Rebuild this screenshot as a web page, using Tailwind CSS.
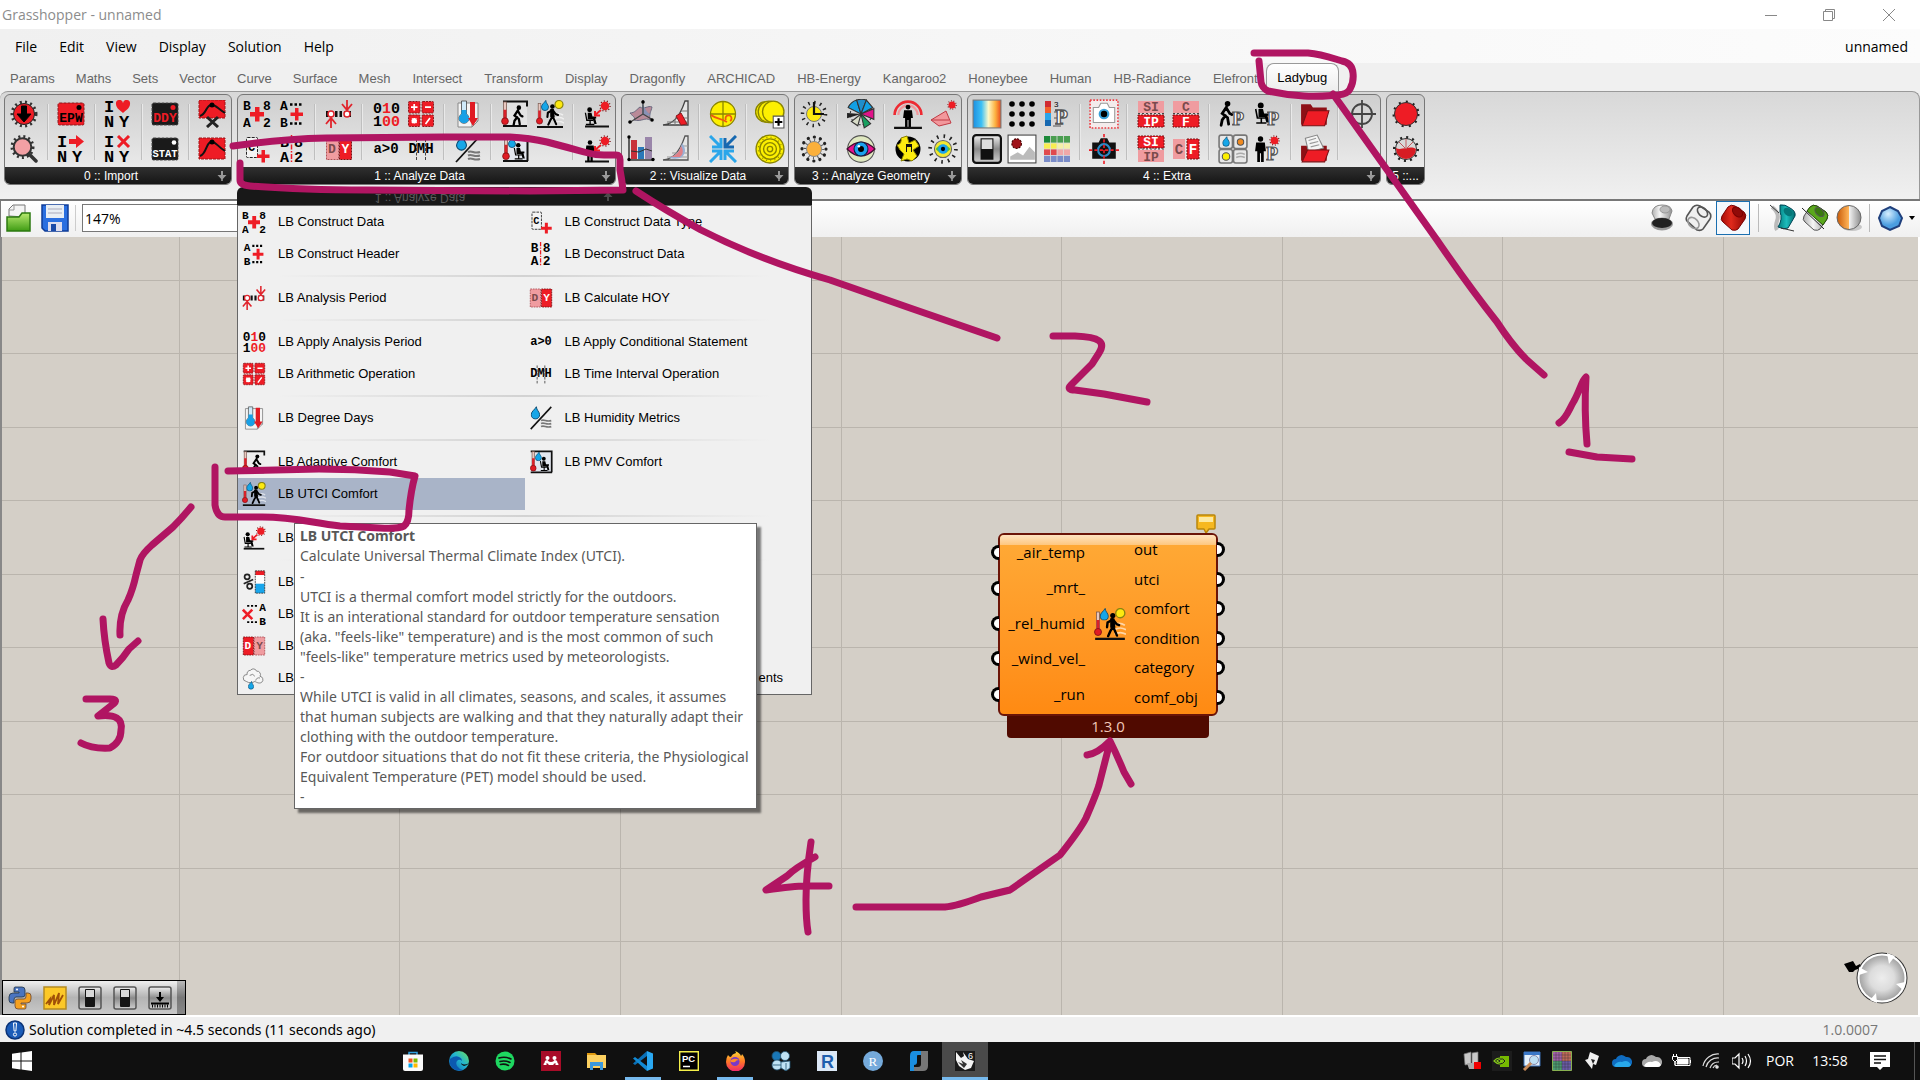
<!DOCTYPE html>
<html lang="en">
<head>
<meta charset="utf-8">
<title>Grasshopper - unnamed</title>
<script src="https://cdn.jsdelivr.net/npm/@tailwindcss/browser@4"></script>
</head>
<body class="flex min-h-screen flex-col overflow-x-hidden bg-[#f0f0f0] font-['Open_Sans',sans-serif] text-sm text-black">

<!-- Shared icon symbols -->
<svg class="absolute size-0" aria-hidden="true">
  <defs>
    <linearGradient id="heat"><stop offset="0" stop-color="#1d8fe0"/><stop offset=".3" stop-color="#3cc0f5"/><stop offset=".55" stop-color="#fdf9c8"/><stop offset=".8" stop-color="#fcb040"/><stop offset="1" stop-color="#ea4a1c"/></linearGradient>
    <linearGradient id="metal" x2="0" y2="1"><stop offset="0" stop-color="#f2f2f2"/><stop offset=".5" stop-color="#8a8a8a"/><stop offset="1" stop-color="#d0d0d0"/></linearGradient>
    <linearGradient id="edgeg" x1="1" x2="0" y2="1"><stop offset="0" stop-color="#6fe05a"/><stop offset=".45" stop-color="#22b5d0"/><stop offset="1" stop-color="#0b5bb5"/></linearGradient>
    <linearGradient id="fox" x2="0" y2="1"><stop offset="0" stop-color="#ffd83a"/><stop offset=".5" stop-color="#ff7a25"/><stop offset="1" stop-color="#f0266c"/></linearGradient>
    <linearGradient id="green" x2="0" y2="1"><stop offset="0" stop-color="#b8ea70"/><stop offset="1" stop-color="#3f9c14"/></linearGradient>
    <radialGradient id="ball" cx=".4" cy=".3"><stop offset="0" stop-color="#d6eeff"/><stop offset="1" stop-color="#4a9de0"/></radialGradient>
    <radialGradient id="compass"><stop offset="0" stop-color="#ededed"/><stop offset=".55" stop-color="#dcdcdc"/><stop offset="1" stop-color="#a4a4a4"/></radialGradient>
    <linearGradient id="redcyl"><stop offset="0" stop-color="#a80c08"/><stop offset=".4" stop-color="#e02a1c"/><stop offset="1" stop-color="#8c0604"/></linearGradient>
    <linearGradient id="tealcyl"><stop offset="0" stop-color="#037c7c"/><stop offset=".5" stop-color="#1dbcbc"/><stop offset="1" stop-color="#036a6c"/></linearGradient>
    <linearGradient id="graycyl"><stop offset="0" stop-color="#b0b0b0"/><stop offset=".4" stop-color="#f6f6f6"/><stop offset="1" stop-color="#909090"/></linearGradient>
    <linearGradient id="halfball"><stop offset="0" stop-color="#c85a08"/><stop offset=".49" stop-color="#ffb458"/><stop offset=".5" stop-color="#f4f4f4"/><stop offset="1" stop-color="#8c8c8c"/></linearGradient>

    <symbol id="sunburst" viewBox="0 0 12 12"><circle cx="6" cy="6" r="5" fill="none" stroke="#7a1014" stroke-width="1.500" stroke-dasharray="1 2.100"/><circle cx="6" cy="6" r="4.200" fill="#ed1c24"/></symbol>
    <symbol id="drop" viewBox="0 0 10 14"><path d="M6 .5C6 4 9.500 6 9.500 9a4.500 4.500 0 0 1-9 0C.5 5.500 4 4 6 .5Z" fill="#15a6e8" stroke="#0b4a70"/></symbol>
    <symbol id="thermo" viewBox="0 0 8 26"><rect x="2.500" y="1" width="3" height="18" fill="#e8c8c0" stroke="#7b5a50" stroke-width=".8"/><path d="M2.500 9h3v9h-3z" fill="#d8202a"/><circle cx="4" cy="21" r="3.500" fill="#e01b24" stroke="#7a1014" stroke-width=".8"/></symbol>
    <symbol id="walker" viewBox="0 0 16 24"><circle cx="8.500" cy="2.800" r="2.500"/><path d="m8 6 1 8 3.500 8M9 13l-3 5-2 4.500M8 7 3.500 9.500 3 14M9 7l3 4 2.500 1" fill="none" stroke="#000" stroke-width="2.300" stroke-linecap="round"/><path d="M6 5.500h4l1 9H6z"/></symbol>
    <symbol id="sitter" viewBox="0 0 16 20"><circle cx="6" cy="2.800" r="2.600"/><path d="M4 6h4l1 4h4v2l-1 0 1.500 6H11l-1.500-5H4z"/><path d="M1.500 6 3 14h7M6.500 14v4M2 18.500h9" fill="none" stroke="#000" stroke-width="1.400"/></symbol>
    <symbol id="crouch" viewBox="0 0 14 24"><circle cx="8" cy="3" r="2.600"/><path d="m7 6-4 6 5 4 1 6M7 7l3 5 2 1M6 14l-3 4-1 5" fill="none" stroke="#000" stroke-width="2.600" stroke-linecap="round"/></symbol>
    <symbol id="person" viewBox="0 0 12 24"><circle cx="6" cy="2.800" r="2.500"/><path d="M2 6h8l1 8H9v10H6.500v-8h-1v8H3V14H1z"/></symbol>

    <symbol id="i-down" viewBox="0 0 28 28"><circle cx="14" cy="14" r="12" fill="none" stroke="#333" stroke-width="3" stroke-dasharray="2 3.200"/><circle cx="14" cy="14" r="10.500" fill="#ee1c25" stroke="#222"/><path d="M11.500 6h5v8H21l-7 8-7-8h4.500z" stroke="#000"/></symbol>
    <symbol id="i-search" viewBox="0 0 28 28"><circle cx="12.500" cy="12" r="10.500" fill="none" stroke="#333" stroke-width="3" stroke-dasharray="2 3"/><circle cx="12.500" cy="12" r="8.800" fill="#f2a0a4" stroke="#333" stroke-width="2"/><path d="m19 19 7 7" stroke="#333" stroke-width="3.500" stroke-linecap="round"/></symbol>
    <symbol id="i-epw" viewBox="0 0 28 28"><rect x="1" y="3" width="26" height="22" rx="1.500" fill="#ee1c25" stroke="#8a1a1e" stroke-dasharray="3 1"/><circle cx="22" cy="7.500" r="2.500"/><text x="14" y="22" text-anchor="middle" font-family="Liberation Mono" font-weight="bold" font-size="13">EPW</text></symbol>
    <symbol id="i-ddy" viewBox="0 0 28 28"><rect x="1" y="3" width="26" height="22" rx="1.500" fill="#1a1a1a" stroke="#444" stroke-dasharray="3 1"/><circle cx="22" cy="7.500" r="2.500" fill="#ee1c25"/><text x="14" y="22" text-anchor="middle" font-family="Liberation Mono" font-weight="bold" font-size="13" fill="#ee1c25">DDY</text></symbol>
    <symbol id="i-stat" viewBox="0 0 28 28"><rect x="1" y="3" width="26" height="22" rx="1.500" fill="#1a1a1a" stroke="#444" stroke-dasharray="3 1"/><circle cx="23" cy="7.500" r="2.300" fill="#fff"/><text x="14" y="22" text-anchor="middle" font-family="Liberation Mono" font-weight="bold" font-size="10.500" fill="#fff">STAT</text></symbol>
    <symbol id="i-heart" viewBox="0 0 28 28"><g font-family="Liberation Mono" font-weight="bold" font-size="17"><text x="0" y="12">I</text><text x="0" y="27">N</text><text x="15" y="27">Y</text></g><path d="M19 13c-5-4-7-6-7-9a3.500 3.500 0 0 1 7-1 3.500 3.500 0 0 1 7 1c0 3-2 5-7 9Z" fill="#ee1c25"/></symbol>
    <symbol id="i-arrow" viewBox="0 0 28 28"><g font-family="Liberation Mono" font-weight="bold" font-size="17"><text x="0" y="12">I</text><text x="0" y="27">N</text><text x="15" y="27">Y</text></g><path d="M12 4h7V0l8 6.500-8 6.500V9h-7z" fill="#ee1c25"/></symbol>
    <symbol id="i-ix" viewBox="0 0 28 28"><g font-family="Liberation Mono" font-weight="bold" font-size="17"><text x="0" y="12">I</text><text x="0" y="27">N</text><text x="15" y="27">Y</text></g><path d="m14 1 11 11M25 1 14 12" stroke="#ee1c25" stroke-width="3"/></symbol>
    <symbol id="i-hill" viewBox="0 0 28 28"><rect x="1" y="3" width="26" height="21" fill="#ee1c25" stroke="#a01418" stroke-dasharray="3 1"/><path d="M2 21c7-2 6-15 12-14 4 0 5 4 13 9" fill="none" stroke="#111" stroke-width="2"/><circle cx="14" cy="7" r="2.500"/></symbol>
    <symbol id="i-hillx" viewBox="0 0 28 28"><rect x="1" y="0" width="26" height="18" fill="#ee1c25" stroke="#a01418" stroke-dasharray="3 1"/><path d="M2 16c7-2 6-12 12-11 4 0 5 3 13 8" fill="none" stroke="#111" stroke-width="2"/><circle cx="14" cy="5" r="2.500"/><path d="m9 17 11 10m0-10L9 27" stroke="#222" stroke-width="3"/></symbol>

    <symbol id="i-cdata" viewBox="0 0 28 28"><g font-family="Liberation Mono" font-weight="bold" font-size="13"><text x="0" y="10">B</text><text x="20" y="10">8</text><text x="0" y="27">A</text><text x="20" y="27">2</text></g><path d="M12 7h4.500v5H21v4.500h-4.500v5H12v-5H7V12h5z" fill="#ee1c25"/></symbol>
    <symbol id="i-header" viewBox="0 0 28 28"><g font-family="Liberation Mono" font-weight="bold" font-size="13"><text x="2" y="10">A</text><text x="2" y="27">B</text></g><path d="M12 4.500h13M12 23.500h13" stroke="#000" stroke-width="2.500" stroke-dasharray="2.500 2"/><path d="M17 8h3.500v4.500H25V16h-4.500v4.500H17V16h-4.500v-3.500H17z" fill="#ee1c25"/></symbol>
    <symbol id="i-ctype" viewBox="0 0 28 28"><rect x="3.500" y="2.500" width="11" height="20" rx="1" fill="#f4f4f4" stroke="#222" stroke-dasharray="3 1.200"/><text x="5" y="16" font-family="Liberation Mono" font-weight="bold" font-size="12">C</text><path d="M18.500 15H22v4.500h4.500V23H22v4.500h-3.500V23H14v-3.500h4.500z" fill="#ee1c25"/></symbol>
    <symbol id="i-decon" viewBox="0 0 28 28"><g font-family="Liberation Mono" font-weight="bold" font-size="15"><text x="2" y="12">B</text><text x="16" y="12">8</text><text x="2" y="27">A</text><text x="16" y="27">2</text></g><path d="M13.500 0v28" stroke="#ee1c25" stroke-width="1.500" stroke-dasharray="5 1.500 1.500 1.500"/></symbol>
    <symbol id="i-period" viewBox="0 0 28 28"><path d="M1 14h26" stroke="#111" stroke-width="6" stroke-dasharray="2.500 2"/><g fill="#fff" stroke="#e0242c" stroke-width="1.500"><circle cx="6" cy="14" r="3"/><circle cx="22" cy="14" r="3"/></g><path d="M6 28V18M1 24l5-6 5 6M22 0v10M17 4l5 6 5-6" fill="none" stroke="#e0242c" stroke-width="1.800"/></symbol>
    <symbol id="i-hoy" viewBox="0 0 28 28"><rect x="1.500" y="3.500" width="12" height="21" fill="#f09ca0" stroke="#b05056" stroke-dasharray="2 1"/><rect x="14.500" y="3.500" width="12" height="21" fill="#ee1c25" stroke="#7a1014" stroke-dasharray="2 1"/><g font-family="Liberation Mono" font-weight="bold" font-size="13"><text x="3" y="18" fill="#7a4a4c">D</text><text x="16.500" y="18" fill="#fff">Y</text></g></symbol>
    <symbol id="i-hoy2" viewBox="0 0 28 28"><rect x="1.500" y="3.500" width="12" height="21" fill="#ee1c25" stroke="#7a1014" stroke-dasharray="2 1"/><rect x="14.500" y="3.500" width="12" height="21" fill="#f09ca0" stroke="#b05056" stroke-dasharray="2 1"/><g font-family="Liberation Mono" font-weight="bold" font-size="13"><text x="3" y="18" fill="#fff">D</text><text x="16.500" y="18" fill="#7a4a4c">Y</text></g></symbol>
    <symbol id="i-bin" viewBox="0 0 28 28"><g font-family="Liberation Mono" font-weight="bold" font-size="15"><text x="1" y="13">0<tspan fill="#ee1c25">1</tspan>0</text><text x="1" y="26">1<tspan fill="#ee1c25">00</tspan></text></g></symbol>
    <symbol id="i-cond" viewBox="0 0 28 28"><text x="14" y="18" text-anchor="middle" font-family="Liberation Mono" font-weight="bold" font-size="14">a&gt;0</text></symbol>
    <symbol id="i-dmh" viewBox="0 0 28 28"><text x="14" y="18" text-anchor="middle" font-family="Liberation Mono" font-weight="bold" font-size="14">DMH</text><path d="M9.500 4v21M18.500 4v21" stroke="#444" stroke-dasharray="3 1.500"/></symbol>
    <symbol id="i-arith" viewBox="0 0 28 28"><g fill="#ee1c25" stroke="#8a1a1e" stroke-dasharray="2 1"><rect x="1.500" y="1.500" width="11.500" height="11.500" rx="1"/><rect x="15" y="1.500" width="11.500" height="11.500" rx="1"/><rect x="1.500" y="15" width="11.500" height="11.500" rx="1"/><rect x="15" y="15" width="11.500" height="11.500" rx="1"/></g><path d="M4 7.200h6.500M7.200 4v6.500M18 7.200h6M4.500 20.800h5.500M7.200 18v5.500M5 18.500l4.500 4.500M9.500 18.500 5 23M23 18l-4.500 6" stroke="#fff" stroke-width="1.700"/></symbol>
    <symbol id="i-degree" viewBox="0 0 28 28"><path d="M4 3h20v18l-6 6H4z" fill="#f4f4f4" stroke="#888"/><path d="M18 27v-6h6" fill="none" stroke="#888"/><path d="M7.500 1h5v13a5 5 0 1 1-5 0z" fill="#cfeafa" stroke="#444" stroke-width=".8"/><path d="M7.500 10h5v4a5 5 0 1 1-5 0z" fill="#18a0e6"/><path d="M16 2h5v16h3l-5 8-5-8h2z" fill="#e01b24"/></symbol>
    <symbol id="i-humid" viewBox="0 0 28 28"><use href="#drop" x="2" y="0" width="11" height="16"/><path d="M26 1 2 27" stroke="#111" stroke-width="1.800"/><path d="M14 17c4-2 6 2 12 0M14 20.500c4-2 6 2 12 0M14 24c4-2 6 2 12 0" fill="none" stroke="#777" stroke-width="2"/></symbol>
    <symbol id="i-adapt" viewBox="0 0 28 28"><path d="M2 2h24v24H2z" fill="#ededed" opacity=".6"/><path d="M2 1.500h24v5M2 26h24" fill="none" stroke="#111" stroke-width="2"/><use href="#thermo" x="0" y="1" width="8" height="25"/><use href="#crouch" x="10" y="5" width="14" height="21"/></symbol>
    <symbol id="i-pmv" viewBox="0 0 28 28"><path d="M2 2h24v24H2z" fill="#e2e6ee"/><path d="M2 1.500h24.500V26M2 26h25" fill="none" stroke="#111" stroke-width="2"/><use href="#thermo" x="1" y="1" width="8" height="25"/><use href="#drop" x="7" y="2" width="8" height="11"/><use href="#sitter" x="12" y="7" width="14" height="19"/></symbol>
    <symbol id="i-utci" viewBox="0 0 28 28"><path d="M17 15q5-3 10 0M18 19q5-3 10 0M18 23q5-3 10 0" fill="none" stroke="#fff" stroke-opacity=".6" stroke-width="1.500"/><path d="M1 27h26" stroke="#111" stroke-width="2"/><use href="#thermo" x="0" y="2" width="7" height="24"/><use href="#drop" x="5" y="0" width="8" height="11"/><use href="#walker" x="8" y="4" width="16" height="22"/><circle cx="23" cy="4.500" r="4" fill="#fde910" stroke="#8a8410" stroke-width="1.200"/></symbol>
    <symbol id="i-sitsun" viewBox="0 0 28 28"><path d="M2 26.500h24" stroke="#111" stroke-width="2"/><use href="#sitter" x="1" y="7" width="15" height="19"/><use href="#sunburst" x="16" y="0" width="12" height="12"/><path d="m18 10-6 5m0-4v4.500h5" fill="none" stroke="#ee1c25" stroke-width="2"/></symbol>
    <symbol id="i-standsun" viewBox="0 0 28 28"><path d="M2 26.500h24" stroke="#111" stroke-width="2"/><use href="#person" x="1" y="5" width="12" height="22"/><use href="#sunburst" x="16" y="0" width="12" height="12"/><path d="m18 10-6 5m0-4v4.500h5" fill="none" stroke="#ee1c25" stroke-width="2"/></symbol>
    <symbol id="i-percent" viewBox="0 0 28 28"><g fill="none" stroke="#222" stroke-width="2"><circle cx="6" cy="8" r="3"/><circle cx="9" cy="19" r="3"/><path d="m2 16 11-5"/></g><path d="M15.500 1h11v5h-11z" fill="#ee1c25"/><path d="M15.500 6h11v10h-11z" fill="#fff"/><path d="M15.500 16h11v11h-11z" fill="#18a6ec"/><path d="M15.500 1h11v26h-11z" fill="none" stroke="#333" stroke-dasharray="2 1"/></symbol>
    <symbol id="i-remove" viewBox="0 0 28 28"><path d="m1 9 11 11M12 9 1 20" stroke="#ee1c25" stroke-width="3"/><path d="M6 4.500h13M6 23.500h13" stroke="#000" stroke-width="2" stroke-dasharray="2.500 2"/><g font-family="Liberation Mono" font-weight="bold" font-size="13"><text x="20" y="10">A</text><text x="20" y="27">B</text></g></symbol>
    <symbol id="i-cloud" viewBox="0 0 28 28"><g fill="#f6f6f6" stroke="#777"><path d="M5 18a4 4 0 0 1 1-8 4 4 0 0 1 4-5 4 4 0 0 1 7 1 4 4 0 0 1 4 6 4 4 0 0 1 2 7c-3 2-6 0-8-1-3 2-7 2-10 0Z"/><path d="M9 11q4-3 6 1m1 5q1-4 5-3" fill="none"/></g><use href="#drop" x="7" y="17" width="7" height="11"/></symbol>

    <symbol id="i-mesh" viewBox="0 0 28 28"><path d="M3 13c5 0 7-4 10-6 4 3 8-2 12 0-1 5-3 6-2 13-5-3-8 2-16 0 2-3-2-4-4-7Z" fill="#b98a98" stroke="#6a6a80"/><path d="M15 3c3 5 5 10 9 12-4 1-6 1-9 0z" fill="#7a94bd" opacity=".8"/><path d="M16 0v14L2 23M16 14l10 6" fill="none" stroke="#444" stroke-width="1.300"/><circle cx="16" cy="2" r="1.800"/><circle cx="3" cy="22" r="1.800"/><circle cx="25" cy="20" r="1.800"/></symbol>
    <symbol id="i-bars" viewBox="0 0 28 28"><path d="M4 5h6v19H4z" fill="#c8303a"/><path d="M11 12h6v12h-6z" fill="#2a78b8"/><path d="M18 2h7v22h-7z" fill="#9a86aa"/><path d="M2 1v24h25" fill="none" stroke="#333" stroke-width="1.500"/><path d="m4 16 8 1 7-3 6 2" fill="none" stroke="#333"/><g><circle cx="2" cy="2" r="1.700"/><circle cx="2" cy="24.500" r="1.700"/><circle cx="26" cy="24.500" r="1.700"/></g></symbol>
    <symbol id="i-psyred" viewBox="0 0 28 28"><path d="M1 25c9-1 16-6 22-24h3v24z" fill="#e6e6e6" stroke="#444" stroke-width="1.300"/><path d="M8 23v2m5-6v6m5-12v12M5 22h21M13 18h13M19 11h7" stroke="#777"/><path d="m14 16 5-3 6 11-6 1z" fill="#ee1c25" stroke="#8a1a1e"/></symbol>
    <symbol id="i-psy" viewBox="0 0 28 28"><path d="M1 25c9-1 16-6 22-24h3v24z" fill="#e6e6e6" stroke="#555" stroke-width="1.300"/><path d="M5 22h21M10 18h16M19 11h7" stroke="#999"/><path d="M7 23c9-3 12-10 13-15 3 4 5 9 0 14-4 2-8 2-13 1Z" fill="#9ab0d4"/><path d="M9 22c8-3 9-8 10-11 3 4 2 9-1 11z" fill="#e08088"/></symbol>
    <symbol id="i-sphere" viewBox="0 0 28 28"><circle cx="14" cy="14" r="12.500" fill="#fdf000" stroke="#8a8500" stroke-width="1.300"/><path d="M1 14h26M14 1v26" stroke="#8a8500" stroke-width="1.300"/><path d="M2 15c5 4 10 3 16 7M17 20a3 3 0 1 1 4 1" fill="none" stroke="#ee5a10" stroke-width="1.800"/></symbol>
    <symbol id="i-arrows" viewBox="0 0 28 28"><g fill="none" stroke="#2aa6ea" stroke-width="3"><path d="m1 1 10 10M3 12h9V3M1 27l10-10M3 16h9v9M27 27 17 17M25 16h-9v9"/><path d="M27 1 17 11M25 12h-9V3" stroke="#1668b0"/></g></symbol>
    <symbol id="i-stack" viewBox="0 0 28 28"><g fill="#fdf000" stroke="#8a8500" stroke-width="1.300"><circle cx="10" cy="12" r="9.500"/><circle cx="13" cy="12" r="10"/><circle cx="17" cy="12" r="10"/></g><path d="M17 16h10v11H17z" fill="#fff" stroke="#555"/><path d="M22 18v7M18.500 21.500h7" stroke="#000" stroke-width="2"/></symbol>
    <symbol id="i-rings" viewBox="0 0 28 28"><g fill="#fdf000" stroke="#8a8500" stroke-width="1.300"><circle cx="14" cy="14" r="13"/><circle cx="14" cy="14" r="9.500"/><circle cx="14" cy="14" r="6"/><circle cx="14" cy="14" r="2.500"/></g><circle cx="14" cy="14" r="11" fill="none" stroke="#8a8500" stroke-dasharray="1 3"/></symbol>
    <symbol id="i-sunclock" viewBox="0 0 28 28"><circle cx="14" cy="14" r="11.500" fill="none" stroke="#222" stroke-width="3.500" stroke-dasharray="1.500 4.500"/><circle cx="14" cy="14" r="7.500" fill="#fde910" stroke="#777"/><path d="M14 2v12h10" fill="none" stroke="#111" stroke-width="2.200"/></symbol>
    <symbol id="i-sun" viewBox="0 0 28 28"><circle cx="14" cy="14" r="12" fill="none" stroke="#222" stroke-width="3.200" stroke-linecap="round" stroke-dasharray=".1 6.180"/><circle cx="14" cy="14" r="9" fill="none" stroke="#555" stroke-width="3" stroke-dasharray="1 3.700"/><circle cx="14" cy="14" r="7.500" fill="#fbb03b" stroke="#888"/></symbol>
    <symbol id="i-rose" viewBox="0 0 28 28"><circle cx="14" cy="14" r="10" fill="none" stroke="#333" stroke-dasharray="2 2"/><path d="M14 14 2 8a13 13 0 0 1 8-7z" fill="#12a0e4" stroke="#333"/><path d="m14 14-4-13a13 13 0 0 1 9 0z" fill="#1f8ecc" stroke="#333"/><path d="m14 14 5-13 6 7z" fill="#12a0e4" stroke="#333"/><path d="m14 14 12-5v10z" fill="#e0128a" stroke="#333"/><path d="m14 14 9 9-6 4z" fill="#18a060" stroke="#333"/><path d="m14 14-3 11-6-4z" fill="#d8dcc8" stroke="#333"/><path d="M14 14 1 13v5z" fill="#222"/></symbol>
    <symbol id="i-eye" viewBox="0 0 28 28"><circle cx="14" cy="14" r="12.500" fill="#dfe8c0" stroke="#555"/><path d="M1 14Q14 1 27 14 14 27 1 14Z" fill="#e8128c" stroke="#401030" stroke-width="1.200"/><circle cx="14" cy="14" r="6.500" fill="#1ba2ee" stroke="#124"/><circle cx="14" cy="14" r="2.800"/><circle cx="12" cy="11.500" r="1.200" fill="#fff"/></symbol>
    <symbol id="i-dome" viewBox="0 0 28 28"><path d="M1.500 15a12.500 12.500 0 0 1 25 0" fill="none" stroke="#ee2a32" stroke-width="2.500"/><path d="M5 15a9 9 0 0 1 18 0" fill="none" stroke="#f2989c" stroke-width="2"/><use href="#person" x="8" y="5" width="12" height="22"/><path d="M1 27h26" stroke="#111" stroke-width="2"/></symbol>
    <symbol id="i-globe" viewBox="0 0 28 28"><circle cx="14" cy="14" r="12.500"/><path d="M3 10q5-1 4-7l6-2 2 7 6-3 4 6-6 4 4 6-5 5-5-2-6 2 3-7-4-4z" fill="#fdec10" stroke="#8a8000"/><path d="M12 9h6v8h-6z" fill="#111"/><path d="M13 12h4v8h-4z" fill="#fdec10"/></symbol>
    <symbol id="i-face" viewBox="0 0 28 28"><path d="m2 20 15-9 5 12-12 3z" fill="#f2989c" stroke="#c03a44"/><path d="m2 20 18 0" stroke="#c03a44"/><use href="#sunburst" x="18" y="0" width="10" height="10"/></symbol>
    <symbol id="i-suneye" viewBox="0 0 28 28"><circle cx="14" cy="14" r="12" fill="none" stroke="#222" stroke-width="3.500" stroke-dasharray="1.500 4.800"/><circle cx="14" cy="14" r="8" fill="#f2e830" stroke="#666"/><path d="M7 14q7-8 14 0-7 8-14 0Z" fill="#4cc04a"/><circle cx="14" cy="14" r="4.500" fill="#1ba2ee"/><circle cx="14" cy="14" r="2"/></symbol>

    <symbol id="i-grad" viewBox="0 0 28 28"><rect x="1" y="1" width="26" height="26" fill="url(#heat)" stroke="#777"/></symbol>
    <symbol id="i-toggle" viewBox="0 0 28 28"><rect x="1" y="1" width="26" height="26" rx="3" fill="url(#metal)" stroke="#111" stroke-width="2"/><rect x="8" y="4" width="12" height="20" fill="#111"/><rect x="9" y="5" width="10" height="9" fill="#ddd"/></symbol>
    <symbol id="i-dots" viewBox="0 0 28 28"><g><circle cx="4" cy="4" r="2.800"/><circle cx="14" cy="4" r="2.800"/><circle cx="24" cy="4" r="2.800"/><circle cx="4" cy="14" r="2.800"/><circle cx="14" cy="14" r="2.800"/><circle cx="24" cy="14" r="2.800"/><circle cx="4" cy="24" r="2.800"/><circle cx="14" cy="24" r="2.800"/><circle cx="24" cy="24" r="2.800"/></g></symbol>
    <symbol id="i-image" viewBox="0 0 28 28"><rect x="1" y="1" width="26" height="26" fill="#fff" stroke="#444"/><circle cx="9" cy="9" r="4.500" fill="#a0141a" stroke="#400" stroke-dasharray="2 1"/><path d="M3 24v-3l7-4 5 3 6-8 5 5v7z" fill="#bbb"/></symbol>
    <symbol id="bigp" viewBox="0 0 16 18"><text x="0" y="16" font-family="Liberation Serif" font-weight="bold" font-size="21" fill="#fff" stroke="#555" stroke-width="1.300">P</text></symbol>
    <symbol id="i-legend" viewBox="0 0 28 28"><path d="M2 1h6v6H2z" fill="#d02a30"/><path d="M2 7h6v6H2z" fill="#f2602a"/><path d="M2 13h6v7H2z" fill="#2aa6ea"/><path d="M2 20h6v6H2z" fill="#1668b0"/><text x="11" y="7" font-size="8" font-family="Liberation Sans">3</text><path d="M10 26h8M11 12h3M11 18h3" stroke="#555"/><use href="#bigp" x="12" y="8" width="16" height="18"/></symbol>
    <symbol id="i-grid" viewBox="0 0 28 28"><path d="M1 1h26v7H1z" fill="#4a9e50"/><path d="M1 8h26v6H1z" fill="#f8ee50"/><path d="M1 14h26v6H1z" fill="#e04a4e"/><path d="M1 20h26v7H1z" fill="#7a8cc8"/><path d="M1 1h7v7H1z" fill="#1d8a3a"/><path d="M14 8h13v6H14z" fill="#f4f0a8"/><path d="M14 14h13v6H14z" fill="#f0a8a8"/><path d="M7.500 1v26M14 1v26M20.500 1v26M1 8h26M1 14h26M1 20.500h26" stroke="#ddd" stroke-width=".8"/></symbol>
    <symbol id="i-camframe" viewBox="0 0 28 28"><rect x="1" y="1" width="26" height="26" fill="#f4ecec" stroke="#ee3a40" stroke-width="1.500" stroke-dasharray="1.500 1.500"/><path d="M4 8h5l2-4h6l2 4h5v14H4z" fill="#fff" stroke="#999"/><circle cx="14" cy="14" r="5" fill="#38a0d8"/><circle cx="14" cy="14" r="3"/></symbol>
    <symbol id="i-camtarget" viewBox="0 0 28 28"><path d="M3 8h6l2-4h6l2 4h6v15H3z" fill="#111"/><circle cx="14" cy="15" r="5.500" fill="none" stroke="#2a8cc8" stroke-width="2"/><path d="M14 0v28M0 15h28" stroke="#ee1c25" stroke-width="1.500" stroke-dasharray="3 2"/></symbol>
    <symbol id="i-siip" viewBox="0 0 28 28"><path d="M1 1h26v12H1z" fill="#f09ca0"/><path d="M1 15h26v12H1z" fill="#ee1c25" stroke="#7a1014" stroke-dasharray="2 1"/><path d="M1 13.500h26" stroke="#444" stroke-dasharray="2 2"/><g font-family="Liberation Mono" font-weight="bold" font-size="13" text-anchor="middle"><text x="14" y="11" fill="#7a4a4c">SI</text><text x="14" y="25.500" fill="#fff">IP</text></g></symbol>
    <symbol id="i-siip2" viewBox="0 0 28 28"><path d="M1 1h26v12H1z" fill="#ee1c25" stroke="#7a1014" stroke-dasharray="2 1"/><path d="M1 15h26v12H1z" fill="#f09ca0"/><path d="M1 14h26" stroke="#444" stroke-dasharray="2 2"/><g font-family="Liberation Mono" font-weight="bold" font-size="13" text-anchor="middle"><text x="14" y="11" fill="#fff">SI</text><text x="14" y="25.500" fill="#7a4a4c">IP</text></g></symbol>
    <symbol id="i-cf" viewBox="0 0 28 28"><path d="M1 1h26v12H1z" fill="#f09ca0"/><path d="M1 15h26v12H1z" fill="#ee1c25" stroke="#7a1014" stroke-dasharray="2 1"/><path d="M1 13.500h26" stroke="#444" stroke-dasharray="2 2"/><g font-family="Liberation Mono" font-weight="bold" font-size="13" text-anchor="middle"><text x="14" y="11" fill="#7a4a4c">C</text><text x="14" y="25.500" fill="#fff">F</text></g></symbol>
    <symbol id="i-cf2" viewBox="0 0 28 28"><path d="M1 4h12v20H1z" fill="#f09ca0"/><path d="M15 4h12v20H15z" fill="#ee1c25" stroke="#7a1014" stroke-dasharray="2 1"/><g font-family="Liberation Mono" font-weight="bold" font-size="14" text-anchor="middle"><text x="7" y="19" fill="#7a4a4c">C</text><text x="21" y="19" fill="#fff">F</text></g></symbol>
    <symbol id="i-runp" viewBox="0 0 28 28"><use href="#crouch" x="0" y="0" width="15" height="27"/><use href="#bigp" x="13" y="9" width="15" height="18"/></symbol>
    <symbol id="i-sitp" viewBox="0 0 28 28"><use href="#sitter" x="0" y="2" width="18" height="23"/><use href="#bigp" x="13" y="9" width="15" height="18"/></symbol>
    <symbol id="i-standp" viewBox="0 0 28 28"><use href="#person" x="0" y="1" width="13" height="26"/><use href="#sunburst" x="15" y="0" width="11" height="11"/><use href="#bigp" x="12" y="10" width="15" height="17"/></symbol>
    <symbol id="i-four" viewBox="0 0 28 28"><g fill="#e8e8e8" stroke="#777" stroke-width="1.500"><rect x="1" y="1" width="12.500" height="12.500" rx="2"/><rect x="14.500" y="1" width="12.500" height="12.500" rx="2"/><rect x="1" y="14.500" width="12.500" height="12.500" rx="2"/><rect x="14.500" y="14.500" width="12.500" height="12.500" rx="2"/></g><use href="#drop" x="4" y="2" width="7" height="10"/><circle cx="21" cy="7.500" r="3" fill="#f08a20" stroke="#555"/><circle cx="7.500" cy="21" r="3.500" fill="#fdf000" stroke="#555"/><path d="M17 19q4-2 8 0m-8 3q4-2 8 0" fill="none" stroke="#aaa" stroke-width="1.500"/></symbol>
    <symbol id="i-folder" viewBox="0 0 28 28"><path d="M1 5h9l2 3h13v16H1z" fill="#8e1016"/><path d="M7 11h20l-4 14H2z" fill="#ee1c25" stroke="#7a1014"/></symbol>
    <symbol id="i-folderdoc" viewBox="0 0 28 28"><path d="M1 11h24v14H1z" fill="#8e1016"/><path d="m5 4 11-3 6 12-14 4z" fill="#f4f4f4" stroke="#888"/><path d="m8 6 7-2M9 9l8-2M10 12l8-2" stroke="#999"/><path d="M7 15h20l-4 11H2z" fill="#ee1c25" stroke="#7a1014"/></symbol>
    <symbol id="i-cross" viewBox="0 0 28 28"><circle cx="14" cy="14" r="10" fill="none" stroke="#444" stroke-width="1.800"/><path d="M14 0v28M0 14h28" stroke="#444" stroke-width="1.800"/></symbol>
    <symbol id="i-redball" viewBox="0 0 28 28"><circle cx="14" cy="14" r="12" fill="none" stroke="#222" stroke-width="3" stroke-dasharray="2 5"/><circle cx="14" cy="14" r="11.500" fill="#ee1c25" stroke="#333"/></symbol>
    <symbol id="i-halfred" viewBox="0 0 28 28"><circle cx="14" cy="14" r="11.500" fill="none" stroke="#222" stroke-width="3" stroke-dasharray="2 4"/><circle cx="14" cy="14" r="10.500" fill="#d8d8d8" stroke="#333"/><path d="M4 13c5 3 14-3 20 1a10 10 0 0 1-20 0z" fill="#d81c24"/><path d="M14 4v10L7 7m7 7 7-7" stroke="#c05a5e" fill="none"/></symbol>
    <symbol id="plug" viewBox="0 0 10 10"><path d="M4 0h2v4h3.500L5.800 8V10H4.200V8L.5 4H4z" fill="#999"/></symbol>
    <symbol id="cyl" viewBox="0 0 28 28"><path d="M9 3 3 12q-2 4 1 6l9 8q4 1 6-1l7-10q2-4-1-7L16 2q-4-2-7 1Z"/></symbol>
  </defs>
</svg>

<header class="flex h-[29px] items-center justify-between bg-white text-[#8c8c8c]">
  <h1 class="pl-0.5 text-sm">Grasshopper - unnamed</h1>
  <div class="flex items-center">
    <button class="flex w-[58px] justify-center" aria-label="Minimize"><svg class="size-3" viewBox="0 0 12 12" stroke="#888"><path d="M0 6.500h12"/></svg></button>
    <button class="flex w-[58px] justify-center" aria-label="Restore"><svg class="size-3" viewBox="0 0 12 12" fill="none" stroke="#888"><path d="M.5 2.500h9v9h-9zM2.500 2.500v-2h9v9h-2"/></svg></button>
    <button class="flex w-[62px] justify-center" aria-label="Close"><svg class="size-3" viewBox="0 0 12 12" stroke="#888"><path d="m0 0 12 12M12 0 0 12"/></svg></button>
  </div>
</header>

<nav class="flex h-[34px] items-center justify-between bg-linear-to-r from-[#f0f0f0] to-[#fcfcfc] pt-0.5 pr-3 pl-[15px] text-sm" aria-label="Menu">
  <div class="flex gap-[22px]">
    <button>File</button><button>Edit</button><button>View</button><button>Display</button><button>Solution</button><button>Help</button>
  </div>
  <span>unnamed</span>
</nav>

<nav class="flex h-7 items-end gap-[22px] pl-2.5 font-['Liberation_Sans',sans-serif] text-[13px] text-[#666]" aria-label="Tabs">
  <div class="flex gap-[21px]"><button class="h-6">Params</button><button class="h-6">Maths</button><button class="h-6">Sets</button><button class="h-6">Vector</button><button class="h-6">Curve</button><button class="h-6">Surface</button><button class="h-6">Mesh</button></div>
  <button class="h-6">Intersect</button><button class="h-6">Transform</button><button class="h-6">Display</button><button class="h-6">Dragonfly</button><button class="h-6">ARCHICAD</button><button class="h-6">HB-Energy</button><button class="h-6">Kangaroo2</button><button class="h-6">Honeybee</button><button class="h-6">Human</button><button class="h-6">HB-Radiance</button><button class="h-6">Elefront</button>
  <button class="-mb-px -ml-3.5 h-[29px] w-[73px] rounded-t-lg border border-b-0 border-[#999] bg-linear-to-b from-white to-[#ececec] text-black">Ladybug</button>
</nav>

<section class="flex h-[108px] items-start gap-[5px] rounded-t-lg border-t border-r border-[#999] bg-linear-to-b from-[#d8d8d8] to-[#f0f0f0] pt-0.5 pl-1" aria-label="Ribbon">

  <div class="flex h-[91px] w-[228px] flex-col overflow-hidden rounded-md border border-[#777] bg-linear-to-b from-[#cecece] to-[#f0f0f0]">
    <div class="flex flex-1 items-center justify-center pt-px">
      <div class="grid grid-flow-col grid-rows-2"><button class="grid size-[35px] place-items-center"><svg class="size-7"><use href="#i-down"/></svg></button><button class="grid size-[35px] place-items-center"><svg class="size-7"><use href="#i-search"/></svg></button></div>
      <div class="mx-[5px] h-14 w-0.5 bg-linear-to-r from-[#aaa] to-white"></div>
      <div class="grid grid-flow-col grid-rows-2"><button class="grid size-[35px] place-items-center"><svg class="size-7"><use href="#i-epw"/></svg></button><button class="grid size-[35px] place-items-center"><svg class="size-7"><use href="#i-arrow"/></svg></button></div>
      <div class="mx-[5px] h-14 w-0.5 bg-linear-to-r from-[#aaa] to-white"></div>
      <div class="grid grid-flow-col grid-rows-2"><button class="grid size-[35px] place-items-center"><svg class="size-7"><use href="#i-heart"/></svg></button><button class="grid size-[35px] place-items-center"><svg class="size-7"><use href="#i-ix"/></svg></button></div>
      <div class="mx-[5px] h-14 w-0.5 bg-linear-to-r from-[#aaa] to-white"></div>
      <div class="grid grid-flow-col grid-rows-2"><button class="grid size-[35px] place-items-center"><svg class="size-7"><use href="#i-ddy"/></svg></button><button class="grid size-[35px] place-items-center"><svg class="size-7"><use href="#i-stat"/></svg></button></div>
      <div class="mx-[5px] h-14 w-0.5 bg-linear-to-r from-[#aaa] to-white"></div>
      <div class="grid grid-flow-col grid-rows-2"><button class="grid size-[35px] place-items-center"><svg class="size-7"><use href="#i-hillx"/></svg></button><button class="grid size-[35px] place-items-center"><svg class="size-7"><use href="#i-hill"/></svg></button></div>
    </div>
    <button class="flex h-[17px] shrink-0 items-center bg-linear-to-b from-[#303030] to-[#161616] pr-1 font-['Liberation_Sans',sans-serif] text-xs text-white"><span class="flex-1">0 :: Import</span><svg class="size-2.5"><use href="#plug"/></svg></button>
  </div>

  <div class="relative">
    <div class="flex h-[91px] w-[379px] flex-col overflow-hidden rounded-md border border-[#777] bg-linear-to-b from-[#cecece] to-[#f0f0f0]">
      <div class="flex flex-1 items-center justify-center pt-px">
        <div class="grid grid-flow-col grid-rows-2"><button class="grid size-[35px] place-items-center"><svg class="size-7"><use href="#i-cdata"/></svg></button><button class="grid size-[35px] place-items-center"><svg class="size-7"><use href="#i-ctype"/></svg></button><button class="grid size-[35px] place-items-center"><svg class="size-7"><use href="#i-header"/></svg></button><button class="grid size-[35px] place-items-center"><svg class="size-7"><use href="#i-decon"/></svg></button></div>
        <div class="mx-[5px] h-14 w-0.5 bg-linear-to-r from-[#aaa] to-white"></div>
        <div class="grid grid-flow-col grid-rows-2"><button class="grid size-[35px] place-items-center"><svg class="size-7"><use href="#i-period"/></svg></button><button class="grid size-[35px] place-items-center"><svg class="size-7"><use href="#i-hoy"/></svg></button></div>
        <div class="mx-[5px] h-14 w-0.5 bg-linear-to-r from-[#aaa] to-white"></div>
        <div class="grid grid-flow-col grid-rows-2"><button class="grid size-[35px] place-items-center"><svg class="size-7"><use href="#i-bin"/></svg></button><button class="grid size-[35px] place-items-center"><svg class="size-7"><use href="#i-cond"/></svg></button><button class="grid size-[35px] place-items-center"><svg class="size-7"><use href="#i-arith"/></svg></button><button class="grid size-[35px] place-items-center"><svg class="size-7"><use href="#i-dmh"/></svg></button></div>
        <div class="mx-[5px] h-14 w-0.5 bg-linear-to-r from-[#aaa] to-white"></div>
        <div class="grid grid-flow-col grid-rows-2"><button class="grid size-[35px] place-items-center"><svg class="size-7"><use href="#i-degree"/></svg></button><button class="grid size-[35px] place-items-center"><svg class="size-7"><use href="#i-humid"/></svg></button></div>
        <div class="mx-[5px] h-14 w-0.5 bg-linear-to-r from-[#aaa] to-white"></div>
        <div class="grid grid-flow-col grid-rows-2"><button class="grid size-[35px] place-items-center"><svg class="size-7"><use href="#i-adapt"/></svg></button><button class="grid size-[35px] place-items-center"><svg class="size-7"><use href="#i-pmv"/></svg></button><button class="grid size-[35px] place-items-center"><svg class="size-7"><use href="#i-utci"/></svg></button></div>
        <div class="mx-[5px] h-14 w-0.5 bg-linear-to-r from-[#aaa] to-white"></div>
        <div class="grid grid-flow-col grid-rows-2"><button class="grid size-[35px] place-items-center"><svg class="size-7"><use href="#i-sitsun"/></svg></button><button class="grid size-[35px] place-items-center"><svg class="size-7"><use href="#i-standsun"/></svg></button></div>
      </div>
      <button class="flex h-[17px] shrink-0 items-center bg-linear-to-b from-[#303030] to-[#161616] pr-1 font-['Liberation_Sans',sans-serif] text-xs text-white"><span class="flex-1">1 :: Analyze Data</span><svg class="size-2.5"><use href="#plug"/></svg></button>
    </div>

    <!-- Drop-down of the Analyze Data panel -->
    <div class="absolute top-full left-0 z-20 mt-0.5 w-[575px] font-['Liberation_Sans',sans-serif] text-[13px]">
      <div class="flex h-[18px] -scale-y-100 items-end rounded-b-md bg-[#181818] pb-1 text-xs leading-[13px] text-[#5c5c5c]"><span class="w-[366px] text-center">1 :: Analyze Data</span><svg class="size-2.5 opacity-40"><use href="#plug"/></svg></div>
      <ul class="relative border border-[#666] bg-[#f0f0f0] [&>li]:grid [&>li]:grid-cols-2 [&_button]:flex [&_button]:h-8 [&_button]:items-center [&_button]:gap-3 [&_button]:pl-1 [&_button]:whitespace-nowrap [&_svg]:size-6">
        <li><button><svg><use href="#i-cdata"/></svg>LB Construct Data</button><button><svg><use href="#i-ctype"/></svg>LB Construct Data Type</button></li>
        <li><button><svg><use href="#i-header"/></svg>LB Construct Header</button><button><svg><use href="#i-decon"/></svg>LB Deconstruct Data</button></li>
        <li class="h-3 items-center"><hr class="col-span-2 mx-10 h-0.5 border-0 bg-linear-to-r from-transparent via-[#d2d2d2] to-transparent"></li>
        <li><button><svg><use href="#i-period"/></svg>LB Analysis Period</button><button><svg><use href="#i-hoy"/></svg>LB Calculate HOY</button></li>
        <li class="h-3 items-center"><hr class="col-span-2 mx-10 h-0.5 border-0 bg-linear-to-r from-transparent via-[#d2d2d2] to-transparent"></li>
        <li><button><svg><use href="#i-bin"/></svg>LB Apply Analysis Period</button><button><svg><use href="#i-cond"/></svg>LB Apply Conditional Statement</button></li>
        <li><button><svg><use href="#i-arith"/></svg>LB Arithmetic Operation</button><button><svg><use href="#i-dmh"/></svg>LB Time Interval Operation</button></li>
        <li class="h-3 items-center"><hr class="col-span-2 mx-10 h-0.5 border-0 bg-linear-to-r from-transparent via-[#d2d2d2] to-transparent"></li>
        <li><button><svg><use href="#i-degree"/></svg>LB Degree Days</button><button><svg><use href="#i-humid"/></svg>LB Humidity Metrics</button></li>
        <li class="h-3 items-center"><hr class="col-span-2 mx-10 h-0.5 border-0 bg-linear-to-r from-transparent via-[#d2d2d2] to-transparent"></li>
        <li><button><svg><use href="#i-adapt"/></svg>LB Adaptive Comfort</button><button><svg><use href="#i-pmv"/></svg>LB PMV Comfort</button></li>
        <li><button class="bg-[#a9b4c8]"><svg><use href="#i-utci"/></svg>LB UTCI Comfort</button></li>
        <li class="h-3 items-center"><hr class="col-span-2 mx-10 h-0.5 border-0 bg-linear-to-r from-transparent via-[#d2d2d2] to-transparent"></li>
        <li><button><svg><use href="#i-sitsun"/></svg>LB</button></li>
        <li class="h-3 items-center"><hr class="col-span-2 mx-10 h-0.5 border-0 bg-linear-to-r from-transparent via-[#d2d2d2] to-transparent"></li>
        <li><button><svg><use href="#i-percent"/></svg>LB</button></li>
        <li><button><svg><use href="#i-remove"/></svg>LB</button></li>
        <li><button><svg><use href="#i-hoy2"/></svg>LB</button></li>
        <li><button><svg><use href="#i-cloud"/></svg>LB</button><span class="self-center pr-7 text-right">ents</span></li>
      </ul>
      <div role="tooltip" class="absolute top-[336px] left-[57px] w-[463px] border border-[#666] bg-white pt-0.5 pb-px pl-[5px] font-['Noto_Sans',sans-serif] text-sm leading-5 whitespace-nowrap text-[#585858] shadow-[4px_4px_2px_rgba(0,0,0,0.5)]">
        <strong class="block">LB UTCI Comfort</strong>
        <p class="h-[21px]">Calculate Universal Thermal Climate Index (UTCI).</p>
        <p>-<br>UTCI is a thermal comfort model strictly for the outdoors.<br>It is an interational standard for outdoor temperature sensation<br>(aka. "feels-like" temperature) and is the most common of such<br>"feels-like" temperature metrics used by meteorologists.<br>-<br>While UTCI is valid in all climates, seasons, and scales, it assumes<br>that human subjects are walking and that they naturally adapt their<br>clothing with the outdoor temperature.<br>For outdoor situations that do not fit these criteria, the Physiological<br>Equivalent Temperature (PET) model should be used.<br>-</p>
      </div>
    </div>
  </div>

  <div class="flex h-[91px] w-[168px] flex-col overflow-hidden rounded-md border border-[#777] bg-linear-to-b from-[#cecece] to-[#f0f0f0]">
    <div class="flex flex-1 items-center justify-center pt-px">
      <div class="grid grid-flow-col grid-rows-2"><button class="grid size-[35px] place-items-center"><svg class="size-7"><use href="#i-mesh"/></svg></button><button class="grid size-[35px] place-items-center"><svg class="size-7"><use href="#i-bars"/></svg></button><button class="grid size-[35px] place-items-center"><svg class="size-7"><use href="#i-psyred"/></svg></button><button class="grid size-[35px] place-items-center"><svg class="size-7"><use href="#i-psy"/></svg></button></div>
      <div class="mx-[5px] h-14 w-0.5 bg-linear-to-r from-[#aaa] to-white"></div>
      <div class="grid grid-flow-col grid-rows-2"><button class="grid size-[35px] place-items-center"><svg class="size-7"><use href="#i-sphere"/></svg></button><button class="grid size-[35px] place-items-center"><svg class="size-7"><use href="#i-arrows"/></svg></button></div>
      <div class="mx-[5px] h-14 w-0.5 bg-linear-to-r from-[#aaa] to-white"></div>
      <div class="grid grid-flow-col grid-rows-2"><button class="grid size-[35px] place-items-center"><svg class="size-[30px]"><use href="#i-stack"/></svg></button><button class="grid size-[35px] place-items-center"><svg class="size-[30px]"><use href="#i-rings"/></svg></button></div>
    </div>
    <button class="flex h-[17px] shrink-0 items-center bg-linear-to-b from-[#303030] to-[#161616] pr-1 font-['Liberation_Sans',sans-serif] text-xs text-white"><span class="flex-1">2 :: Visualize Data</span><svg class="size-2.5"><use href="#plug"/></svg></button>
  </div>

  <div class="flex h-[91px] w-[168px] flex-col overflow-hidden rounded-md border border-[#777] bg-linear-to-b from-[#cecece] to-[#f0f0f0]">
    <div class="flex flex-1 items-center justify-center pt-px">
      <div class="grid grid-flow-col grid-rows-2"><button class="grid size-[35px] place-items-center"><svg class="size-7"><use href="#i-sunclock"/></svg></button><button class="grid size-[35px] place-items-center"><svg class="size-7"><use href="#i-sun"/></svg></button></div>
      <div class="mx-[5px] h-14 w-0.5 bg-linear-to-r from-[#aaa] to-white"></div>
      <div class="grid grid-flow-col grid-rows-2"><button class="grid size-[35px] place-items-center"><svg class="size-[30px]"><use href="#i-rose"/></svg></button><button class="grid size-[35px] place-items-center"><svg class="size-[30px]"><use href="#i-eye"/></svg></button></div>
      <div class="mx-[5px] h-14 w-0.5 bg-linear-to-r from-[#aaa] to-white"></div>
      <div class="grid grid-flow-col grid-rows-2"><button class="grid size-[35px] place-items-center"><svg class="size-[30px]"><use href="#i-dome"/></svg></button><button class="grid size-[35px] place-items-center"><svg class="size-7"><use href="#i-globe"/></svg></button><button class="grid size-[35px] place-items-center"><svg class="size-7"><use href="#i-face"/></svg></button><button class="grid size-[35px] place-items-center"><svg class="size-[30px]"><use href="#i-suneye"/></svg></button></div>
    </div>
    <button class="flex h-[17px] shrink-0 items-center bg-linear-to-b from-[#303030] to-[#161616] pr-1 font-['Liberation_Sans',sans-serif] text-xs text-white"><span class="flex-1">3 :: Analyze Geometry</span><svg class="size-2.5"><use href="#plug"/></svg></button>
  </div>

  <div class="flex h-[91px] w-[414px] flex-col overflow-hidden rounded-md border border-[#777] bg-linear-to-b from-[#cecece] to-[#f0f0f0]">
    <div class="flex flex-1 items-center justify-center pt-px">
      <div class="grid grid-flow-col grid-rows-2"><button class="grid size-[35px] place-items-center"><svg class="size-[30px]"><use href="#i-grad"/></svg></button><button class="grid size-[35px] place-items-center"><svg class="size-[30px]"><use href="#i-toggle"/></svg></button><button class="grid size-[35px] place-items-center"><svg class="size-7"><use href="#i-dots"/></svg></button><button class="grid size-[35px] place-items-center"><svg class="size-[30px]"><use href="#i-image"/></svg></button><button class="grid size-[35px] place-items-center"><svg class="size-7"><use href="#i-legend"/></svg></button><button class="grid size-[35px] place-items-center"><svg class="size-7"><use href="#i-grid"/></svg></button></div>
      <div class="mx-[5px] h-14 w-0.5 bg-linear-to-r from-[#aaa] to-white"></div>
      <div class="grid grid-flow-col grid-rows-2"><button class="grid size-[35px] place-items-center"><svg class="size-[30px]"><use href="#i-camframe"/></svg></button><button class="grid size-[35px] place-items-center"><svg class="size-[30px]"><use href="#i-camtarget"/></svg></button></div>
      <div class="mx-[5px] h-14 w-0.5 bg-linear-to-r from-[#aaa] to-white"></div>
      <div class="grid grid-flow-col grid-rows-2"><button class="grid size-[35px] place-items-center"><svg class="size-7"><use href="#i-siip"/></svg></button><button class="grid size-[35px] place-items-center"><svg class="size-7"><use href="#i-siip2"/></svg></button><button class="grid size-[35px] place-items-center"><svg class="size-7"><use href="#i-cf"/></svg></button><button class="grid size-[35px] place-items-center"><svg class="size-7"><use href="#i-cf2"/></svg></button></div>
      <div class="mx-[5px] h-14 w-0.5 bg-linear-to-r from-[#aaa] to-white"></div>
      <div class="grid grid-flow-col grid-rows-2"><button class="grid size-[35px] place-items-center"><svg class="size-7"><use href="#i-runp"/></svg></button><button class="grid size-[35px] place-items-center"><svg class="size-[30px]"><use href="#i-four"/></svg></button><button class="grid size-[35px] place-items-center"><svg class="size-7"><use href="#i-sitp"/></svg></button><button class="grid size-[35px] place-items-center"><svg class="size-7"><use href="#i-standp"/></svg></button></div>
      <div class="mx-[5px] h-14 w-0.5 bg-linear-to-r from-[#aaa] to-white"></div>
      <div class="grid grid-flow-col grid-rows-2"><button class="grid size-[35px] place-items-center"><svg class="size-[30px]"><use href="#i-folder"/></svg></button><button class="grid size-[35px] place-items-center"><svg class="size-[30px]"><use href="#i-folderdoc"/></svg></button></div>
      <div class="mx-[5px] h-14 w-0.5 bg-linear-to-r from-[#aaa] to-white"></div>
      <div class="grid grid-flow-col grid-rows-2"><button class="grid size-[35px] place-items-center"><svg class="size-7"><use href="#i-cross"/></svg></button></div>
    </div>
    <button class="flex h-[17px] shrink-0 items-center bg-linear-to-b from-[#303030] to-[#161616] pr-1 font-['Liberation_Sans',sans-serif] text-xs text-white"><span class="flex-1">4 :: Extra</span><svg class="size-2.5"><use href="#plug"/></svg></button>
  </div>

  <div class="flex h-[91px] w-[39px] flex-col overflow-hidden rounded-md border border-[#777] bg-linear-to-b from-[#cecece] to-[#f0f0f0]">
    <div class="grid flex-1 place-content-center pt-px"><button class="grid size-[35px] place-items-center"><svg class="size-7"><use href="#i-redball"/></svg></button><button class="grid size-[35px] place-items-center"><svg class="size-7"><use href="#i-halfred"/></svg></button></div>
    <button class="h-[17px] shrink-0 bg-linear-to-b from-[#303030] to-[#161616] font-['Liberation_Sans',sans-serif] text-xs text-white">5 ::...</button>
  </div>
</section>

<section class="flex h-[38px] items-center justify-between border-t-2 border-l border-[#777] bg-linear-to-b from-white to-[#f0f0f0] pr-1 pb-0.5 pl-1" aria-label="Canvas toolbar">
  <div class="flex items-center">
    <button aria-label="Open"><svg class="size-7" viewBox="0 0 28 28"><path d="M4 12V5l4-4h12v12z" fill="#f4f4f4" stroke="#777"/><path d="M9 1v5H4" fill="none" stroke="#999"/><path d="M2 13h12l3-4h8v18H2z" fill="url(#green)" stroke="#2d7a10" stroke-width="1.500"/></svg></button>
    <button class="ml-2" aria-label="Save"><svg class="size-7" viewBox="0 0 28 28"><path d="M1 1h26v26H4l-3-3z" fill="#2a6fe0" stroke="#0f3c96" stroke-width="1.500"/><path d="M5 1h18v13H5z" fill="#e8eef4"/><path d="M7 5h14M7 9h14" stroke="#aab"/><path d="M7 18h14v9H7z" fill="#dde"/><path d="M10 20h5v7h-5z" fill="#1a4aa8"/></svg></button>
    <div class="mx-1.5 h-[26px] w-px bg-[#ccc]"></div>
    <input class="h-7 w-44 border border-[#777] bg-white pl-0.5 text-sm" value="147%" aria-label="Zoom">
  </div>
  <div class="flex items-center">
    <button class="mx-1" aria-label="No preview"><svg class="size-7" viewBox="0 0 28 28"><path d="M4 9q1-8 10-8t10 6l-3 8H7z" fill="url(#graycyl)" stroke="#888"/><ellipse cx="17" cy="5.500" rx="5" ry="3.500" fill="#bbb" stroke="#999"/><ellipse cx="14" cy="20" rx="11" ry="6.500" fill="#999"/><ellipse cx="14" cy="19" rx="10" ry="5" fill="#222"/></svg></button>
    <button class="mx-1" aria-label="Wireframe preview"><svg class="size-7" viewBox="0 0 28 28" fill="#f0f0f0" stroke="#555" stroke-width="1.600"><use href="#cyl"/><ellipse cx="18.500" cy="8" rx="6" ry="4" transform="rotate(45 18.500 8)" fill="none"/><ellipse cx="9.500" cy="19" rx="6.500" ry="4.500" transform="rotate(45 9.500 19)" fill="none" stroke="#999"/></svg></button>
    <button class="grid size-[34px] place-items-center border border-[#1a6fb0] bg-[#f4f8fc]" aria-label="Shaded preview"><svg class="size-7" viewBox="0 0 28 28" stroke="#700"><use href="#cyl" fill="url(#redcyl)"/><ellipse cx="18.500" cy="8" rx="6" ry="4" transform="rotate(45 18.500 8)" fill="#900a08"/></svg></button>
    <div class="mr-1.5 ml-2 h-7 w-px bg-[#bbb]"></div>
    <button class="mr-1 ml-1" aria-label="Selected preview"><svg class="size-7" viewBox="0 0 28 28"><path d="M3 3q8 6 5 14-2 6 0 9" fill="none" stroke="#bbb" stroke-width="4"/><path d="M11 1q5-1 10 3 6 3 5 8l-7 12q-4 2-10-1 5-8 2-15z" fill="url(#tealcyl)" stroke="#045"/><ellipse cx="19" cy="8" rx="5" ry="3.500" transform="rotate(40 19 8)" fill="#057678"/><path d="m1 1 9 8M12 24l13 3" stroke="#333"/></svg></button>
    <button class="mr-1.5" aria-label="Document preview"><svg class="size-7" viewBox="0 0 28 28" stroke="#555"><use href="#cyl" fill="url(#graycyl)"/><path d="m6 7 3-4q3-3 7-1l9 6q3 3 1 7l-4 6z" fill="#5aa81c" stroke="#254d08"/><ellipse cx="18.500" cy="8" rx="5.500" ry="3.500" transform="rotate(45 18.500 8)" fill="#3a7a10"/><path d="m1 4 22 21" stroke="#222"/></svg></button>
    <button aria-label="Mesh quality"><svg class="size-7" viewBox="0 0 28 28"><ellipse cx="17" cy="23" rx="10" ry="4" fill="#aaa" opacity=".6"/><circle cx="14" cy="13.500" r="12" fill="url(#halfball)" stroke="#666"/></svg></button>
    <div class="mx-1.5 h-7 w-px bg-[#bbb]"></div>
    <button aria-label="Display options"><svg class="size-7" viewBox="0 0 28 28"><path d="m14 3 8 4 4 7-3 8-9 4-8-4-3-8 3-7z" fill="url(#ball)" stroke="#1f3f7c" stroke-width="2"/></svg></button>
    <svg class="ml-1 h-1 w-2" viewBox="0 0 8 4"><path d="M1 0h6L4 4z"/></svg>
  </div>
</section>

<main class="relative flex-1 overflow-hidden border-x-2 border-l-[#888] border-r-white bg-[#d4cfc7]">
  <svg class="absolute inset-0 h-full w-full" stroke="#bab5ad" aria-hidden="true"><path d="M177.500 0V2000M397.500 0V2000M618.500 0V2000M839.500 0V2000M1059.500 0V2000M1280.500 0V2000M1500.500 0V2000M1721.500 0V2000M0 43.500H4000M0 116.500H4000M0 190.500H4000M0 263.500H4000M0 337.500H4000M0 410.500H4000M0 484.500H4000M0 557.500H4000M0 631.500H4000M0 704.500H4000"/></svg>

  <!-- UTCI Comfort component -->
  <article class="absolute top-[296px] left-[996px] w-[220px] text-[15px]">
    <svg class="absolute -top-[19px] right-0.5 h-5 w-5" viewBox="0 0 20 20"><path d="M2 1h16q1 0 1 1v12q0 1-1 1h-5l-3 4-2-4H2q-1 0-1-1V2q0-1 1-1Z" fill="#f6b820" stroke="#b8860c" stroke-width="1.500" stroke-linejoin="round"/><path d="M3 3h14v5H3z" fill="#fde9a0"/></svg>
    <div class="relative flex h-[183px] rounded-md border-2 border-[#6a1408] bg-linear-to-b from-[#ffaa36] to-[#ff8a12] pb-0.5">
      <div class="absolute inset-x-0 top-0 h-2.5 rounded-t bg-linear-to-b from-[#fee3c0] to-[#fec77e]"></div>
      <ul class="relative flex w-[85px] flex-col text-right [&>li]:relative [&>li]:flex [&>li]:flex-1 [&>li]:items-center [&>li]:justify-end [&_i]:absolute [&_i]:-left-[9px] [&_i]:h-[15px] [&_i]:w-2 [&_i]:rounded-l-full [&_i]:border-[3px] [&_i]:border-r-0 [&_i]:border-black [&_i]:bg-white">
        <li><i></i>_air_temp</li><li><i></i>_mrt_</li><li><i></i>_rel_humid</li><li><i></i>_wind_vel_</li><li><i></i>_run</li>
      </ul>
      <div class="flex w-[49px] items-center justify-center"><svg class="size-8"><use href="#i-utci"/></svg></div>
      <ul class="relative flex flex-1 flex-col [&>li]:relative [&>li]:flex [&>li]:flex-1 [&>li]:items-center [&_i]:absolute [&_i]:-right-[9px] [&_i]:h-[15px] [&_i]:w-2 [&_i]:rounded-r-full [&_i]:border-[3px] [&_i]:border-l-0 [&_i]:border-black [&_i]:bg-white">
        <li>out<i></i></li><li>utci<i></i></li><li>comfort<i></i></li><li>condition<i></i></li><li>category<i></i></li><li>comf_obj<i></i></li>
      </ul>
    </div>
    <footer class="mx-[9px] -mt-px flex h-[23px] items-center justify-center rounded-b bg-[#500a00] text-[#f0c8b8]">1.3.0</footer>
  </article>

  <div class="absolute bottom-0 left-0 flex h-[35px] w-[184px] items-center border border-black bg-linear-to-b from-[#f0f0f0] via-[#b4b4b4] to-[#c8c8c8]">
    <div class="flex flex-1 gap-[11px] pl-[5px]">
      <button aria-label="Python"><svg class="size-6" viewBox="0 0 24 24"><path d="M7 1h7q3 0 3 3v5q0 2-3 2H8q-2 0-2 3v3H4q-3 0-3-3v-3q0-4 4-4h6V6H6V3q0-2 1-2Z" fill="#4a74c0" stroke="#234" stroke-width=".8"/><path d="M17 23h-7q-3 0-3-3v-5q0-2 3-2h6q2 0 2-3V7h2q3 0 3 3v3q0 4-4 4h-6v1h5v3q0 2-1 2Z" fill="#f4a020" stroke="#643" stroke-width=".8"/><circle cx="9" cy="3.500" r="1" fill="#fff"/><circle cx="15" cy="20.500" r="1" fill="#fff"/></svg></button>
      <button aria-label="Scribble"><svg class="size-6" viewBox="0 0 24 24"><rect x="1" y="1" width="22" height="22" fill="#fcc828" stroke="#b48a20" stroke-width="1.500"/><path d="m3 18 4-5-1 6 5-10v10l5-12-1 11 5-9" fill="none" stroke="#a05008" stroke-width="1.800"/></svg></button>
      <button aria-label="Boolean toggle"><svg class="size-6" viewBox="0 0 24 24"><rect x="1" y="1" width="22" height="22" rx="2" fill="url(#metal)" stroke="#555" stroke-width="1.500"/><rect x="7" y="3" width="10" height="18" rx="1" fill="#151515"/><rect x="8" y="4" width="8" height="7" fill="#d8d8d8"/></svg></button>
      <button aria-label="Boolean toggle"><svg class="size-6" viewBox="0 0 24 24"><rect x="1" y="1" width="22" height="22" rx="2" fill="url(#metal)" stroke="#555" stroke-width="1.500"/><rect x="7" y="3" width="10" height="18" rx="1" fill="#151515"/><rect x="8" y="4" width="8" height="7" fill="#d8d8d8"/></svg></button>
      <button aria-label="Number slider"><svg class="size-6" viewBox="0 0 24 24"><rect x="1" y="1" width="22" height="22" rx="2" fill="url(#metal)" stroke="#555" stroke-width="1.500"/><path d="M11 6h2v5h3l-4 5-4-5h3z"/><path d="M3 17.500h18" stroke="#000" stroke-width="2"/><path d="M4 20h17" stroke="#000" stroke-width="3" stroke-dasharray="1 1.500"/></svg></button>
    </div>
    <div class="h-full w-2 bg-linear-to-b from-[#bbb] via-[#777] to-[#888]"></div>
  </div>

  <svg class="absolute right-2.5 bottom-2.5 h-[54px] w-[66px]" viewBox="0 0 66 54"><path d="m2 13 9-3 3 5 4-2 1 4-6 2-2 2-4 0z"/><circle cx="40" cy="27" r="25.500" fill="#333"/><circle cx="40" cy="27" r="24.500" fill="#fff"/><circle cx="40" cy="27" r="22.500" fill="url(#compass)"/><path d="m17 16 9 5-9 3zM45 2l8 3-6 8zM63 31l-9 2 7 6zM35 52l-7-3 6-7z" fill="#fff"/></svg>
</main>

<footer class="flex h-[27px] items-center justify-between border-t-2 border-white bg-[#f0f0f0] pr-[42px] pl-[5px] font-['Noto_Sans',sans-serif] text-sm">
  <div class="flex items-center gap-1"><svg class="size-5" viewBox="0 0 20 20"><circle cx="10" cy="10" r="9" fill="#1b5cb8" stroke="#0c3478" stroke-width="1.500"/><path d="M8.500 3h3l-.6 8H9.100z" fill="#1b5cb8" stroke="#fff"/><circle cx="10" cy="14.500" r="1.600" fill="#1b5cb8" stroke="#fff"/></svg><span>Solution completed in ~4.5 seconds (11 seconds ago)</span></div>
  <span class="font-['Open_Sans',sans-serif] text-[#777]">1.0.0007</span>
</footer>

<!-- Windows taskbar -->
<footer class="flex h-[38px] items-center justify-between bg-[#101010] text-sm text-white">
  <div class="flex h-full items-center">
    <button class="pl-3" aria-label="Start"><svg class="size-5" viewBox="0 0 20 20" fill="#fff"><path d="m0 2.700 8.500-1.200v8H0zM9.500 1.400 20 0v9.500H9.500zM0 10.500h8.500v8L0 17.300zM9.500 10.500H20V20L9.500 18.600z"/></svg></button>
    <div class="ml-[358px] flex h-full [&>button]:flex [&>button]:w-[46px] [&>button]:items-center [&>button]:justify-center [&_svg]:size-5">
      <button aria-label="Store"><svg viewBox="0 0 20 20"><path d="M6 4V1.500h8V4" fill="none" stroke="#30a0e0" stroke-width="1.500"/><path d="M0 3.500h20V18q0 2-2 2H2q-2 0-2-2z" fill="#fafafa"/><path d="M5.500 7.500h4v4h-4z" fill="#f05022"/><path d="M10.500 7.500h4v4h-4z" fill="#7fba00"/><path d="M5.500 12.500h4v4h-4z" fill="#00a4ef"/><path d="M10.500 12.500h4v4h-4z" fill="#ffb900"/></svg></button>
      <button aria-label="Edge"><svg viewBox="0 0 20 20"><circle cx="10" cy="10" r="10" fill="url(#edgeg)"/><path d="M1 8q5-4 9-2 3 1 3 4-2-2-4-1-3 2-1 6 2 3 6 4-8 2-12-4Q0 12 1 8Z" fill="#0c59b0"/><path d="M12 12q3 3 8 0-2 3-5 3-3-1-3-3Z" fill="#101010"/></svg></button>
      <button aria-label="Spotify"><svg viewBox="0 0 20 20"><circle cx="10" cy="10" r="9.500" fill="#1ed760"/><path d="M4 7q6-2 12 1M5 10.500q5-1.500 10 1M5.500 13.500q4-1 8 1" fill="none" stroke="#111" stroke-width="1.600" stroke-linecap="round"/></svg></button>
      <button aria-label="Mendeley"><svg viewBox="0 0 20 20"><path d="M0 0h20v20H0z" fill="#a80c28"/><path d="M2.500 14q0-2 1-2 0-3 3-3 1 2 3.500 2t3.500-2q3 0 3 3 1 0 1 2h-3v-2l-2 1v1h-5v-1l-2-1v2z" fill="#fff"/><circle cx="6.500" cy="7" r="2" fill="#fff"/><circle cx="13.500" cy="7" r="2" fill="#fff"/></svg></button>
      <button aria-label="File Explorer"><svg viewBox="0 0 20 20"><path d="M0 2h8l2 2H0z" fill="#e09a10"/><path d="M0 4h19v13H0z" fill="#fcd060"/><path d="M3 11h13v8h-3v-4H6v4H3z" fill="#3a98dc"/></svg></button>
      <button class="relative" aria-label="Visual Studio Code"><svg viewBox="0 0 20 20"><path d="m14 0 6 2.500v15L14 20z" fill="#2aa8f2"/><path d="m14 5-12 9-2-1.500L14 0z" fill="#0a70b8"/><path d="M14 15 2 6 0 7.500 14 20z" fill="#128ad4"/></svg><span class="absolute inset-x-[5px] bottom-0 h-[3px] bg-[#76b9ed]"></span></button>
      <button aria-label="PyCharm"><svg viewBox="0 0 20 20"><path d="M.7.7h18.600v18.600H.7z" fill="#000" stroke="#f4f04a" stroke-width="1.400"/><text x="3" y="11" font-family="Liberation Sans" font-weight="bold" font-size="9.500" fill="#fff">PC</text><path d="M4 15.500h7" stroke="#fff" stroke-width="1.500"/></svg></button>
      <button class="relative" aria-label="Firefox"><svg viewBox="0 0 20 20"><path d="M3 4q1 2 3 2 1-3 5-4 0-1-1-2 5 2 6 5 1-1 1-2 3 3 3 8a9.500 9.500 0 0 1-19 0q0-4 2-7z" fill="url(#fox)"/><circle cx="10" cy="10.500" r="4.500" fill="#7a38c8"/><path d="M5 10q4-4 9-1-3 0-4 2-3 1-5-1Z" fill="#ff8a28"/></svg><span class="absolute inset-x-[5px] bottom-0 h-[3px] bg-[#76b9ed]"></span></button>
      <button aria-label="Blocks"><svg viewBox="0 0 20 20" fill="#bfe2f4" stroke="#205070" stroke-width=".8"><circle cx="5.500" cy="5" r="4.500" fill="#1a78b8"/><circle cx="14" cy="5" r="4.500"/><circle cx="6" cy="14" r="5"/><path d="m10 11 9-1v7l-4 3-5-3z"/><path d="M15 12v8M2 14h8"/></svg></button>
      <button aria-label="Revit"><svg viewBox="0 0 20 20"><path d="M0 0h20v20H0z" fill="#dce8f6"/><text x="4" y="17" font-family="Liberation Sans" font-weight="bold" font-size="18" fill="#1f5fae">R</text></svg></button>
      <button aria-label="RStudio"><svg viewBox="0 0 20 20"><circle cx="10" cy="10" r="10" fill="#75aadb"/><text x="5.500" y="14.500" font-family="Liberation Serif" font-size="13" fill="#fff">R</text></svg></button>
      <button aria-label="DraftSight"><svg viewBox="0 0 20 20"><path d="M5 0h7v4H9q-1 0-1 1v6q0 3-3 3v6H1V5q0-5 4-5Z" fill="#1a8ee0"/><path d="M12 0h7v15q0 5-5 5H5v-4h4q3 0 3-3z" fill="#777"/></svg></button>
      <button class="relative bg-[#4a4a4a]" aria-label="Rhino 6"><svg viewBox="0 0 20 20"><path d="M0 0h20v20H0z" fill="#1a1a1a"/><path d="m1 1 5 6 3-2-1-4 5 7 6 2-3 7-6 2-6-4-3-6z" fill="#f4f4f4"/><path d="m3 11 5 2-2-4 6 4-3 4z" fill="#333"/><text x="13" y="8" font-family="Liberation Sans" font-size="9" fill="#fff">6</text></svg><span class="absolute inset-x-0 bottom-0 h-[3px] bg-[#76b9ed]"></span></button>
    </div>
  </div>
  <div class="flex h-full items-center gap-2.5 [&>svg]:size-5">
    <svg viewBox="0 0 20 20"><path d="m2 3 7-2v12l-6 1zM10 2l6-1v11l-6 2z" fill="#c8c8c8" stroke="#777" stroke-width=".7"/><path d="M5 12h9v6H7z" fill="#aaa"/><path d="M12 11h7v7h-7z" fill="#f00000"/></svg>
    <svg viewBox="0 0 20 20"><path d="M0 0h20v20H0z" fill="#1c1c1c"/><path d="M8 5h9v11H8z" fill="#76b900"/><path d="M2 10q5-6 11 0-5 6-11 0Zm3 0q3-3 5 0-2 3-5 0Z" fill="none" stroke="#86c91a" stroke-width="1.200"/><path d="M8 8q3-1 5 2-2 3-5 3" fill="none" stroke="#1c1c1c"/></svg>
    <svg viewBox="0 0 20 20"><path d="M2 1h16v14H2z" fill="#e4f0fa" stroke="#3a70b8"/><path d="M2 1h16v3H2z" fill="#3a78c8"/><circle cx="12" cy="9" r="4.500" fill="#bfe0f4" stroke="#88a"/><path d="m9 12-7 7" stroke="#c88a58" stroke-width="3"/></svg>
    <svg viewBox="0 0 20 20"><path d="M.5.500h19v19H.5z" fill="#a060a8" stroke="#88b050"/><path d="M1 10h9v9H1z" fill="#4a9a70"/><path d="M10 1h9v9h-9z" fill="#c06a58"/><path d="M10 10h9v9h-9z" fill="#6a5aa8"/><path d="M4 1v18M7 1v18M10 1v18M13 1v18M16 1v18M1 4h18M1 7h18M1 10h18M1 13h18M1 16h18" stroke="#333" stroke-opacity=".4"/></svg>
    <svg viewBox="0 0 20 20"><path d="m8 1 9 4-3 9-3-1-1 5-7-9 3-1z" fill="#f0f0f0"/><path d="m9 8 4 1-2 4z" fill="#222"/></svg>
    <svg viewBox="0 0 20 20"><path d="M4 16a4 4 0 0 1 0-8 6 6 0 0 1 10-2 5 5 0 0 1 2 10z" fill="#0f6cc0"/><path d="M2 15q3-5 8-4 6-3 9 3-1 2-3 2H4z" fill="#28a8ea"/></svg>
    <svg viewBox="0 0 20 20"><path d="M4 16a4 4 0 0 1 0-8 6 6 0 0 1 10-2 5 5 0 0 1 2 10z" fill="#a8a8a8"/><path d="M2 15q3-5 8-4 6-3 9 3-1 2-3 2H4z" fill="#fff"/></svg>
    <svg viewBox="0 0 20 20" fill="none" stroke="#fff"><path d="M5 6.500h13v8H3v-4M18.500 9v3M.5 5.500h5v3l-2 2h-1l-2-2zM1.500 3v3M4.500 3v3M3 10v4"/><path d="M6 8h10v5H5z" fill="#fff"/></svg>
    <svg viewBox="0 0 20 20" fill="none" stroke="#ddd" stroke-width="1.200"><path d="M1 15A15 15 0 0 1 17 3M4 16A12 12 0 0 1 17 7M8 17a9 9 0 0 1 9-6"/><path d="M11 17a5 5 0 0 1 4-3"/><circle cx="15" cy="16" r="1.200" fill="#fff"/></svg>
    <svg viewBox="0 0 20 20" fill="none" stroke="#fff" stroke-width="1.200"><path d="M0 7h3l4-4v14l-4-4H0zM10 7q2 3 0 6M13 5q3 5 0 10M16 3q5 7 0 14"/></svg>
    <span class="w-9 text-center">POR</span>
    <time class="w-11 text-center">13:58</time>
    <svg class="mr-3.5 ml-2" viewBox="0 0 20 20"><path d="M0 1h20v15h-7l-3 3-3-3H0z" fill="#fff"/><path d="M4 5h12M4 8.500h12M4 12h7" stroke="#111" stroke-width="1.300"/></svg>
    <div class="mr-[5px] h-full w-px bg-[#555]"></div>
  </div>
</footer>

<!-- Hand-drawn step markers -->
<svg class="pointer-events-none absolute top-0 left-0 z-30 h-[1000px] w-[1700px]" fill="none" stroke="#b01562" stroke-width="7" stroke-linecap="round" stroke-linejoin="round" aria-hidden="true">
  <path d="M1254 53H1308C1322 54 1332 58 1342 61Q1352 63 1353 73Q1354 82 1350 89Q1348 94 1338 95C1325 96 1318 97 1304 96Q1285 95 1268 91Q1262 88 1261 82L1259 61"/>
  <path d="M1333 94 1343 108 1437 240Q1470 288 1497 322Q1512 345 1526 359L1544 375"/>
  <path d="M1559 423C1567 418 1569 409 1574 401 1580 390 1582 380 1586 377Q1584 410 1587 444M1569 452 1597 457 1632 459"/>
  <path d="M233 146Q280 139 326 138L443 137 510 137Q530 138 547 142Q566 147 584 152 594 155 604 155H616Q620 155 620 160V170Q622 180 623 190L530 191 367 190Q300 190 250 186 240 185 240 180V163"/>
  <path d="M636 191Q665 210 701 230 760 260 830 280L910 308 997 338"/>
  <path d="M1053 336H1075C1100 337 1106 342 1099 353L1092 364 1071 385Q1066 390 1075 390L1104 394 1147 402"/>
  <path d="M215 467V505Q217 517 225 517H262C295 517 312 523 340 526L380 528Q398 529 404 526 409 522 409 510 411 490 415 476L390 472Q355 469 319 469L228 471"/>
  <path d="M191 507Q182 518 173 527L152 545Q142 554 140 560L136 575Q133 589 128 600 119 615 120 635M103 619Q104 640 109 663 111 669 116 665 123 658 129 649L138 641"/>
  <path d="M86 699H110Q120 699 112 705L98 716Q124 713 121 730 121 742 110 748 92 749 81 743"/>
  <path d="M815 857Q795 868 787 876L766 890Q795 886 805 886H829M811 842Q806 875 806 900 806 920 808 932"/>
  <path d="M856 907H945Q957 906 981 897L1010 890 1060 855Q1080 830 1086 818 1096 795 1099 785L1110 742M1087 755Q1097 754 1110 741 1117 755 1124 772L1131 784"/>
</svg>
</body>
</html>
